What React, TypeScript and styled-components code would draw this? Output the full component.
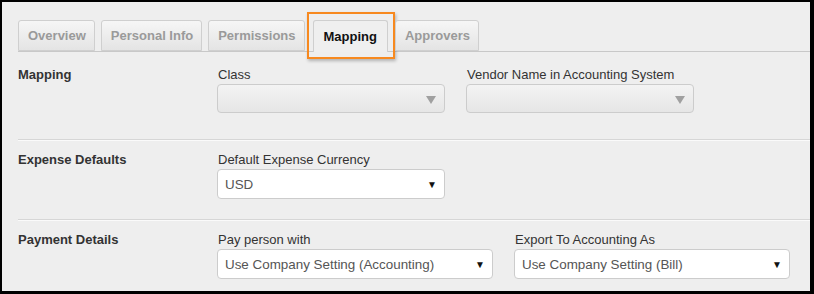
import React from "react";
import styled, { createGlobalStyle } from "styled-components";

const GlobalStyle = createGlobalStyle`
  html, body {
    margin: 0;
    padding: 0;
    background: #000;
  }
  body {
    font-family: "Liberation Sans", Arial, sans-serif;
    font-size: 13px;
    color: #333;
  }
`;

const tabs = ["Overview", "Personal Info", "Permissions", "Mapping", "Approvers"];

const App: React.FC = () => {
  return (
    <>
      <GlobalStyle />
      <Frame>
        <TabBar>
          {tabs.map((t) => (
            <Tab key={t} $active={t === "Mapping"}>
              {t}
              {t === "Mapping" && <Highlight />}
            </Tab>
          ))}
        </TabBar>

        <Section $pad={15} $padBottom={26}>
          <SectionLabel>Mapping</SectionLabel>
          <Fields>
            <Field>
              <FieldLabel>Class</FieldLabel>
              <DisabledSelect $width={228}>
                <GrayArrow />
              </DisabledSelect>
            </Field>
            <Field>
              <FieldLabel>Vendor Name in Accounting System</FieldLabel>
              <DisabledSelect $width={228}>
                <GrayArrow />
              </DisabledSelect>
            </Field>
          </Fields>
        </Section>

        <Section $pad={12} $padBottom={20} $divider>
          <SectionLabel>Expense Defaults</SectionLabel>
          <Fields>
            <Field>
              <FieldLabel>Default Expense Currency</FieldLabel>
              <Select $width={228}>
                <span>USD</span>
                <Caret>▼</Caret>
              </Select>
            </Field>
          </Fields>
        </Section>

        <Section $pad={12} $padBottom={12} $divider>
          <SectionLabel>Payment Details</SectionLabel>
          <Fields>
            <Field>
              <FieldLabel>Pay person with</FieldLabel>
              <Select $width={276}>
                <span>Use Company Setting (Accounting)</span>
                <Caret>▼</Caret>
              </Select>
            </Field>
            <Field>
              <FieldLabel>Export To Accounting As</FieldLabel>
              <Select $width={276}>
                <span>Use Company Setting (Bill)</span>
                <Caret>▼</Caret>
              </Select>
            </Field>
          </Fields>
        </Section>
      </Frame>
    </>
  );
};

const Frame = styled.div`
  box-sizing: border-box;
  width: 814px;
  height: 294px;
  overflow: hidden;
  background: #eeeeee;
  border-style: solid;
  border-color: #000;
  border-width: 2px 4px 3px 2px;
  padding-top: 18px;
`;

const TabBar = styled.div`
  display: flex;
  align-items: flex-end;
  margin-left: 16px;
  height: 31px;
  border-bottom: 1px solid #c8c8c8;
`;

const Tab = styled.div<{ $active?: boolean }>`
  position: relative;
  box-sizing: border-box;
  height: ${(p) => (p.$active ? "32px" : "31px")};
  margin-bottom: ${(p) => (p.$active ? "-1px" : "0")};
  margin-left: ${(p) => (p.$active ? "2px" : "0")};
  margin-right: ${(p) => (p.$active ? "7px" : "6px")};
  padding: ${(p) => (p.$active ? "0 10px" : "0 8px 0 9px")};
  display: flex;
  align-items: center;
  font-weight: bold;
  font-size: 13px;
  color: ${(p) => (p.$active ? "#111" : "#9a9a9a")};
  background: ${(p) =>
    p.$active ? "#efefef" : "linear-gradient(#f6f6f6, #e4e4e4)"};
  border: 1px solid #cfcfcf;
  border-bottom: ${(p) => (p.$active ? "none" : "1px solid #cfcfcf")};
  border-radius: 3px 3px 0 0;
`;

const Highlight = styled.span`
  position: absolute;
  left: -7px;
  right: -8px;
  top: -9px;
  bottom: -7px;
  border: 2px solid #f7891f;
  box-shadow: 1px 2px 3px rgba(0, 0, 0, 0.25);
  pointer-events: none;
`;

const Section = styled.div<{ $pad: number; $padBottom: number; $divider?: boolean }>`
  display: flex;
  margin-left: 16px;
  padding-top: ${(p) => p.$pad}px;
  padding-bottom: ${(p) => p.$padBottom}px;
  border-top: ${(p) => (p.$divider ? "1px solid #d6d6d6" : "none")};
  box-shadow: ${(p) => (p.$divider ? "inset 0 1px 0 #fafafa" : "none")};
`;

const SectionLabel = styled.div`
  width: 199px;
  font-weight: bold;
  line-height: 16px;
  color: #333;
`;

const Fields = styled.div`
  display: flex;
  gap: 21px;
`;

const Field = styled.div`
  display: flex;
  flex-direction: column;
`;

const FieldLabel = styled.div`
  line-height: 16px;
  margin-bottom: 1px;
  padding-left: 1px;
  color: #333;
`;

const DisabledSelect = styled.div<{ $width: number }>`
  position: relative;
  box-sizing: border-box;
  width: ${(p) => p.$width}px;
  height: 29px;
  border: 1px solid #cccccc;
  border-radius: 4px;
  background: linear-gradient(#f3f3f3, #e6e6e6);
`;

const GrayArrow = styled.span`
  position: absolute;
  right: 8px;
  top: 11px;
  width: 0;
  height: 0;
  border-left: 5px solid transparent;
  border-right: 5px solid transparent;
  border-top: 8px solid #a0a0a0;
`;

const Select = styled.div<{ $width: number }>`
  box-sizing: border-box;
  width: ${(p) => p.$width}px;
  height: 30px;
  display: flex;
  align-items: center;
  justify-content: space-between;
  padding: 0 7px 0 7px;
  background: #fff;
  border: 1px solid #cccccc;
  border-radius: 4px;
  font-size: 13.4px;
  color: #555;
`;

const Caret = styled.span`
  font-size: 10px;
  color: #111;
`;

export default App;
